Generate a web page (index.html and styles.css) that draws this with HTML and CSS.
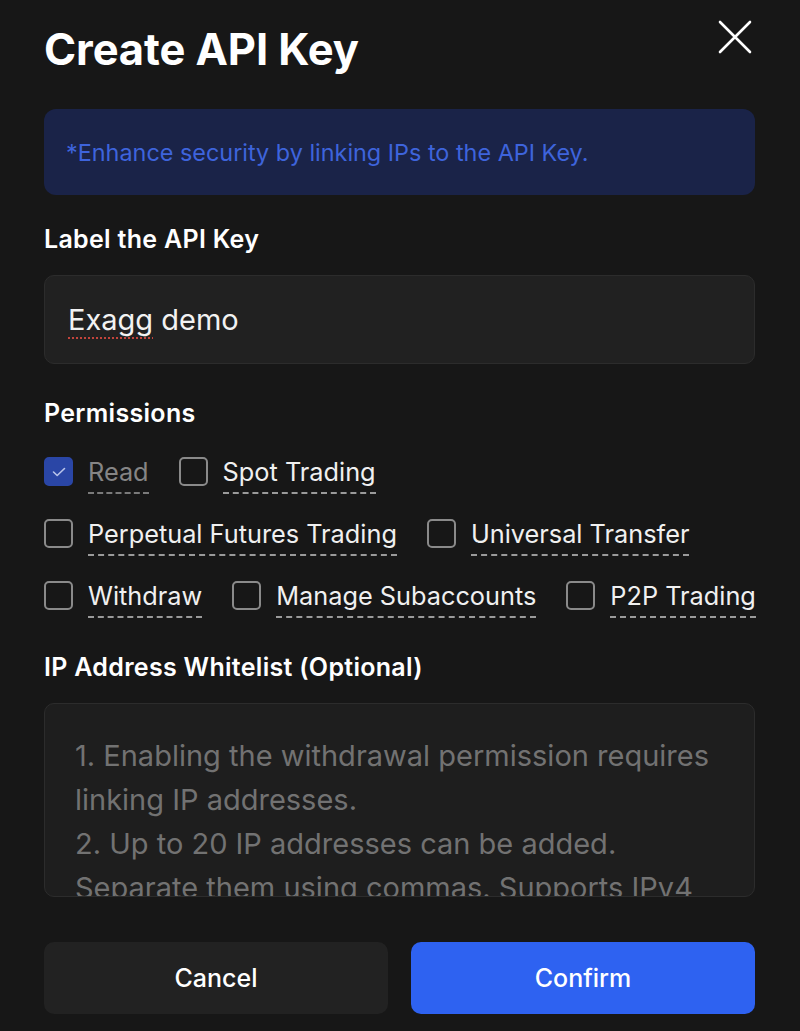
FILE: index.html
```html
<!DOCTYPE html>
<html lang="en">
<head>
<meta charset="utf-8">
<title>Create API Key</title>
<link rel="stylesheet" href="styles.css">
</head>
<body>
<div class="modal">
  <header class="head">
    <h1 class="title">Create API Key</h1>
    <button class="close" aria-label="Close">
      <svg width="34" height="34" viewBox="0 0 34 34"><path d="M2 2 L32 32 M32 2 L2 32" stroke="#fff" stroke-width="2.6" stroke-linecap="round" fill="none"/></svg>
    </button>
  </header>

  <div class="notice">*Enhance security by linking IPs to the API Key.</div>

  <h2 class="section">Label the API Key</h2>
  <div class="input"><span class="spell">Exagg</span> demo</div>

  <h2 class="section perm-title">Permissions</h2>
  <div class="perms">
    <div class="row">
      <label class="perm disabled"><span class="box checked"><svg width="14" height="10" viewBox="0 0 14 10"><path d="M1.5 5 L5.2 8.5 L12.5 1.5" stroke="#b9c4ea" stroke-width="1.6" fill="none" stroke-linecap="round" stroke-linejoin="round"/></svg></span><span class="txt">Read</span></label>
      <label class="perm"><span class="box"></span><span class="txt">Spot Trading</span></label>
    </div>
    <div class="row">
      <label class="perm"><span class="box"></span><span class="txt">Perpetual Futures Trading</span></label>
      <label class="perm"><span class="box"></span><span class="txt">Universal Transfer</span></label>
    </div>
    <div class="row">
      <label class="perm"><span class="box"></span><span class="txt">Withdraw</span></label>
      <label class="perm"><span class="box"></span><span class="txt">Manage Subaccounts</span></label>
      <label class="perm"><span class="box"></span><span class="txt">P2P Trading</span></label>
    </div>
  </div>

  <h2 class="section ip-title">IP Address Whitelist (Optional)</h2>
  <div class="textarea">
    <p>1. Enabling the withdrawal permission requires linking IP addresses.<br>2. Up to 20 IP addresses can be added. Separate them using commas. Supports IPv4 and IPv6 addresses.</p>
  </div>

  <div class="actions">
    <button class="btn cancel">Cancel</button>
    <button class="btn confirm">Confirm</button>
  </div>
</div>
</body>
</html>
```

FILE: styles.css
```css
* { box-sizing: border-box; }
html, body {
  margin: 0;
  padding: 0;
  background: #171717;
}
body {
  font-family: Inter, "Noto Sans", sans-serif;
  color: #ffffff;
  width: 800px;
  height: 1031px;
  overflow: hidden;
}
.modal {
  padding: 0 45px 0 44px;
}
.head {
  display: flex;
  justify-content: space-between;
  align-items: flex-start;
  padding-top: 25px;
}
.title {
  margin: 0;
  font-size: 43.5px;
  line-height: 48px;
  font-weight: 700;
  letter-spacing: -0.1px;
}
.close {
  background: none;
  border: 0;
  padding: 0;
  margin: -5px 3px 0 0;
  width: 34px;
  height: 34px;
  display: flex;
}
.notice {
  margin-top: 36px;
  height: 86px;
  background: #1a2348;
  border-radius: 12px;
  color: #3e64dc;
  font-size: 23.4px;
  display: flex;
  align-items: center;
  padding: 0 22px;
}
.section {
  margin: 0;
  font-size: 25px;
  line-height: 28px;
  font-weight: 600;
  letter-spacing: 0.3px;
}
.notice + .section { margin-top: 30px; }
.input {
  margin-top: 22px;
  height: 89px;
  background: #212121;
  border: 1px solid #2c2c2c;
  border-radius: 10px;
  display: flex;
  align-items: center;
  padding: 0 23px;
  font-size: 29px;
  color: #f2f2f2;
  white-space: pre;
}
.spell {
  text-decoration: underline dotted #c2443c;
  text-decoration-thickness: 2px;
  text-underline-offset: 7px;
}
.perm-title { margin-top: 35px; }
.perms {
  margin-top: 30px;
  display: flex;
  flex-direction: column;
  gap: 25px;
}
.row {
  display: flex;
  align-items: flex-start;
  gap: 30px;
}
.perm {
  display: flex;
  align-items: flex-start;
  gap: 15px;
}
.box {
  width: 29px;
  height: 29px;
  border: 2px solid #8a8a8a;
  border-radius: 5px;
  display: flex;
  align-items: center;
  justify-content: center;
  flex: none;
}
.box.checked {
  background: #2a46a6;
  border-color: #2a46a6;
}
.txt {
  font-size: 25.3px;
  line-height: 29px;
  color: #f0f0f0;
  padding-bottom: 6px;
  border-bottom: 2px dashed #9a9a9a;
  white-space: nowrap;
}
.disabled .txt { color: #858585; border-bottom-color: #7a7a7a; }
.ip-title { margin-top: 35px; }
.textarea {
  margin-top: 22px;
  height: 194px;
  background: #1e1e1e;
  border: 1px solid #2c2c2c;
  border-radius: 10px;
  padding: 30px 30px 0 30px;
  overflow: hidden;
}
.textarea p {
  margin: 0;
  font-size: 29px;
  line-height: 44px;
  color: #727272;
}
.actions {
  margin-top: 45px;
  display: flex;
  gap: 23px;
}
.btn {
  flex: 1;
  height: 72px;
  border: 0;
  border-radius: 10px;
  font-family: Inter, "Noto Sans", sans-serif;
  font-size: 25px;
  font-weight: 500;
  color: #fff;
}
.cancel { background: #222222; }
.confirm { background: #2e62f1; }
```
